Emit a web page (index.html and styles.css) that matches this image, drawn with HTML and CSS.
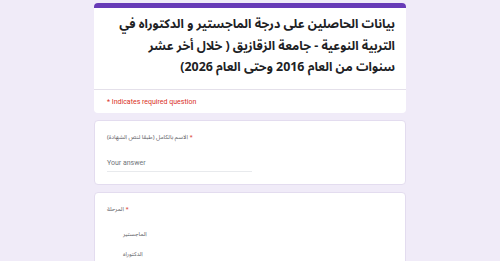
FILE: index.html
```html
<!DOCTYPE html>
<html lang="ar">
<head>
<meta charset="utf-8">
<link rel="stylesheet" href="styles.css">
</head>
<body>
<main class="form">
  <section class="card header-card">
    <div class="accent"></div>
    <h1 class="title" dir="rtl">بيانات الحاصلين على درجة الماجستير و الدكتوراه في<br>التربية النوعية - جامعة الزقازيق ( خلال أخر عشر<br>سنوات من العام 2016 وحتى العام 2026)</h1>
    <div class="required-note">* Indicates required question</div>
  </section>
  <section class="card question">
    <div class="label"><span>الاسم بالكامل (طبقا لنص الشهادة)</span> <span class="star">*</span></div>
    <div class="answer">Your answer</div>
  </section>
  <section class="card question">
    <div class="label"><span>المرحلة</span> <span class="star">*</span></div>
    <div class="options">
      <div class="option"><span class="radio"></span><span>الماجستير</span></div>
      <div class="option"><span class="radio"></span><span>الدكتوراه</span></div>
    </div>
  </section>
</main>
</body>
</html>
```

FILE: styles.css
```css
html, body {
  margin: 0;
  padding: 0;
  background: #f0ebf8;
  height: 100%;
  overflow: hidden;
}
body {
  font-family: Roboto, "Liberation Sans", Arial, sans-serif;
  color: #202124;
}
.form {
  width: 312px;
  margin: 0 auto;
  padding-top: 3px;
  display: flex;
  flex-direction: column;
  gap: 7px;
}
.card {
  background: #fff;
  border-radius: 4px;
  border: 1px solid #e3dcef;
  box-sizing: border-box;
}
.header-card {
  border: none;
  overflow: hidden;
}
.accent {
  height: 5px;
  background: #673ab7;
}
.title {
  margin: 0;
  padding: 6px 11px 10px 11px;
  font-family: "Noto Sans Arabic", "DejaVu Sans", sans-serif;
  font-weight: bold;
  font-size: 12.4px;
  line-height: 21.5px;
  white-space: nowrap;
  color: #202124;
  text-align: right;
  border-bottom: 1px solid #e4e0ea;
}
.required-note {
  padding: 7px 13px 6px;
  font-size: 7px;
  line-height: 10px;
  color: #d93025;
}
.question {
  padding: 10px 12px 12px;
}
.label {
  font-family: "Noto Sans Arabic", "DejaVu Sans", sans-serif;
  font-size: 6px;
  line-height: 12px;
  color: #5f6368;
  direction: ltr;
  text-align: left;
}
.star {
  color: #d93025;
}
.answer {
  margin-top: 14px;
  width: 145px;
  font-size: 7px;
  line-height: 12px;
  color: #70757a;
  padding-bottom: 2px;
  border-bottom: 1px solid #e8eaed;
}
.options {
  margin-top: 13px;
  display: flex;
  flex-direction: column;
  gap: 8px;
}
.option {
  display: flex;
  align-items: center;
  gap: 7px;
  font-family: "Noto Sans Arabic", "DejaVu Sans", sans-serif;
  font-size: 6px;
  line-height: 12px;
  color: #5f6368;
  padding-left: 1px;
}
.radio {
  width: 8px;
  height: 8px;
  border-radius: 50%;
  border: 1px solid #fff;
  box-sizing: border-box;
}
```
